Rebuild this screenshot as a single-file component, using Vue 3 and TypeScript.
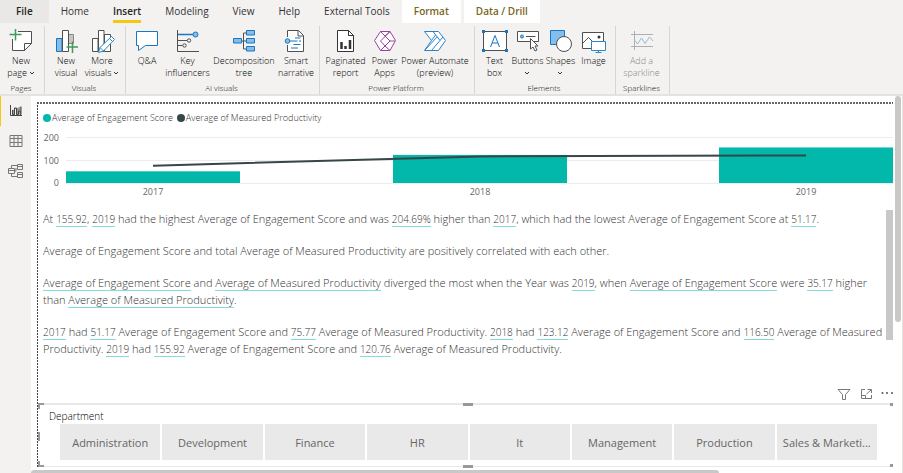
<script setup lang="ts">
import { ref } from 'vue'

interface Tab { name: string; kind?: string }
interface Tool { icon: string; lines: string[]; size: string; menu?: 'inline' | 'below'; disabled?: boolean }
interface Group { name: string; tools: Tool[] }
interface Part { t: string; u?: boolean }

const tabs: Tab[] = [
  { name: 'File', kind: 'file' },
  { name: 'Home' },
  { name: 'Insert' },
  { name: 'Modeling' },
  { name: 'View' },
  { name: 'Help' },
  { name: 'External Tools' },
  { name: 'Format', kind: 'context' },
  { name: 'Data / Drill', kind: 'context' },
]
const activeTab = ref('Insert')

const groups: Group[] = [
  { name: 'Pages', tools: [{ icon: 'page', lines: ['New', 'page'], size: 'm', menu: 'inline' }] },
  {
    name: 'Visuals',
    tools: [
      { icon: 'visual', lines: ['New', 'visual'], size: 'm' },
      { icon: 'more', lines: ['More', 'visuals'], size: 'm', menu: 'inline' },
    ],
  },
  {
    name: 'AI visuals',
    tools: [
      { icon: 'qa', lines: ['Q&A'], size: 'm' },
      { icon: 'key', lines: ['Key', 'influencers'], size: 'l' },
      { icon: 'tree', lines: ['Decomposition', 'tree'], size: 'xl' },
      { icon: 'smart', lines: ['Smart', 'narrative'], size: 'm' },
    ],
  },
  {
    name: 'Power Platform',
    tools: [
      { icon: 'report', lines: ['Paginated', 'report'], size: 'l' },
      { icon: 'apps', lines: ['Power', 'Apps'], size: 's' },
      { icon: 'flow', lines: ['Power Automate', '(preview)'], size: 'xl' },
    ],
  },
  {
    name: 'Elements',
    tools: [
      { icon: 'text', lines: ['Text', 'box'], size: 's' },
      { icon: 'buttons', lines: ['Buttons'], size: 's', menu: 'below' },
      { icon: 'shapes', lines: ['Shapes'], size: 's', menu: 'below' },
      { icon: 'image', lines: ['Image'], size: 's' },
    ],
  },
  { name: 'Sparklines', tools: [{ icon: 'spark', lines: ['Add a', 'sparkline'], size: 'l', disabled: true }] },
]

const eng = 'Average of Engagement Score'
const prod = 'Average of Measured Productivity'
const story: Part[][] = [
  [
    { t: 'At ' }, { t: '155.92', u: true }, { t: ', ' }, { t: '2019', u: true },
    { t: ` had the highest ${eng} and was ` }, { t: '204.69%', u: true }, { t: ' higher than ' },
    { t: '2017', u: true }, { t: `, which had the lowest ${eng} at ` }, { t: '51.17', u: true }, { t: '.' },
  ],
  [{ t: `${eng} and total ${prod} are positively correlated with each other.` }],
  [
    { t: eng, u: true }, { t: ' and ' }, { t: prod, u: true }, { t: ' diverged the most when the Year was ' },
    { t: '2019', u: true }, { t: ', when ' }, { t: eng, u: true }, { t: ' were ' }, { t: '35.17', u: true },
    { t: ' higher than ' }, { t: prod, u: true }, { t: '.' },
  ],
  [
    { t: '2017', u: true }, { t: ' had ' }, { t: '51.17', u: true }, { t: ` ${eng} and ` }, { t: '75.77', u: true },
    { t: ` ${prod}. ` }, { t: '2018', u: true }, { t: ' had ' }, { t: '123.12', u: true }, { t: ` ${eng} and ` },
    { t: '116.50', u: true }, { t: ` ${prod}. ` }, { t: '2019', u: true }, { t: ' had ' },
    { t: '155.92', u: true }, { t: ` ${eng} and ` }, { t: '120.76', u: true }, { t: ` ${prod}.` },
  ],
]
const isNumber = (t: string): boolean => /^\d/.test(t)

const years = [
  { year: '2017', score: 51.17, productivity: 75.77, x: 110 },
  { year: '2018', score: 123.12, productivity: 116.5, x: 437 },
  { year: '2019', score: 155.92, productivity: 120.76, x: 763 },
]
const yOf = (v: number): number => 53 - v * 0.228
const line = years.map((d) => `${d.x},${yOf(d.productivity)}`).join(' ')

const departments = ['Administration', 'Development', 'Finance', 'HR', 'It', 'Management', 'Production', 'Sales & Marketi...']
</script>

<template>
  <div class="app">
    <nav class="tabs" aria-label="Ribbon tabs">
      <button
        v-for="t in tabs" :key="t.name" type="button" class="tab"
        :class="[t.kind, { active: t.name === activeTab }]" @click="activeTab = t.name"
      ><span>{{ t.name }}</span></button>
    </nav>

    <header class="ribbon">
      <section v-for="g in groups" :key="g.name" class="group">
        <div class="tools">
          <button v-for="b in g.tools" :key="b.icon" type="button" class="tool" :class="b.size" :disabled="b.disabled">
            <svg class="icon" viewBox="0 0 26 24" width="26" height="24" fill="none" stroke="#505050" aria-hidden="true">
              <g v-if="b.icon === 'page'">
                <path d="M10 2.500H23.500V14.500L16.500 21.500H4.500V10" fill="#fff" />
                <path d="M23.500 14.500H16.500V21.500" />
                <path d="M7.500 0V11.500M1.500 5.500H13.500" stroke="#3f9b57" stroke-width="1.500" />
              </g>
              <g v-else-if="b.icon === 'visual'">
                <path d="M14.500 5.500h6v9h-6z" fill="#c8c6c4" stroke="#8a8886" />
                <path d="M3.500 9.500h5.500v13h-5.500z" fill="#83beec" stroke="#1976c0" />
                <path d="M9.500 1.500h6v21h-6z" fill="#fff" />
                <path d="M19.500 12.500V24M13.500 18H25" stroke="#3f9b57" stroke-width="1.500" />
              </g>
              <g v-else-if="b.icon === 'more'">
                <path d="M3.500 9.500h5.500v13h-5.500zM9.500 1.500h5.500v21h-5.500zM15.500 5.500h6v17h-6z" fill="#fff" />
                <path d="M9.500 23.500L11 18.500L22.500 7.500L25.500 10.500L14.500 22Z" fill="#fff" stroke="#2b88c8" />
                <path d="M11 18.500L14.500 22M20.500 9.500L23.500 12.500" stroke="#2b88c8" />
              </g>
              <path v-else-if="b.icon === 'qa'" d="M2.500 2.500H23.500V16.500H11.500L4.500 21.500V16.500H2.500Z" fill="#fff" stroke="#1976c0" />
              <g v-else-if="b.icon === 'key'">
                <path d="M2.500 1V22.500H24M3 11.500H12M3 16.500H7.500" />
                <path d="M3 5.500H18" stroke="#1976c0" stroke-width="1.500" />
                <circle cx="20.500" cy="5.500" r="2.500" fill="#83beec" stroke="#1976c0" />
                <circle cx="14" cy="11.500" r="1.700" /><circle cx="9.500" cy="16.500" r="1.700" />
              </g>
              <g v-else-if="b.icon === 'tree'">
                <path d="M10 12H16M12.500 4V20H16M12.500 4H16" />
                <path d="M2.500 9.500h8v4.500h-8zM15.500 1.500h8v4.500h-8zM15.500 9.500h8v4.500h-8zM15.500 17.500h8v4.500h-8z" fill="#83beec" stroke="#1976c0" />
              </g>
              <g v-else-if="b.icon === 'smart'">
                <path d="M4.500 8V1.500H15.500L20.500 6.500V22.500H4.500V16" fill="#fff" /><path d="M15 1.500V7H20.500" />
                <path d="M6 12H14.500M16 12H18M10.500 15.500H17.500M12 9H17.500M8 19H15" stroke="#1976c0" />
                <circle cx="4.500" cy="12" r="2.300" fill="#83beec" stroke="#1976c0" />
              </g>
              <g v-else-if="b.icon === 'report'" stroke="#333">
                <path d="M4.500 1.500H15.500L20.500 6.500V22.500H4.500Z" fill="#fff" /><path d="M15.500 1.500V6.500H20.500" />
                <path d="M8.500 13V20M12.500 17V20M17 11V20" stroke-width="2.500" />
              </g>
              <g v-else-if="b.icon === 'apps'" stroke="#9b3fa5">
                <path d="M8.500 2.500H18L23.500 11.500L18 21.500H8.500L2.500 11.500Z" fill="#fff" />
                <path d="M8.500 2.500L18 12L13 17L18 21.500M18 2.500L13 7L18 12L23 12M8.500 21.500L13 17L8.500 12L18 2.500" />
              </g>
              <g v-else-if="b.icon === 'flow'" stroke="#2b83c9">
                <path d="M2.500 2.500H16.500L23.500 11.500L16.500 21.500H2.500L9.500 11.500Z" fill="#fff" />
                <path d="M11 2.500L18 11.500L9.500 21.500M9.500 11.500L13.500 6M3 21L15 8M18 11.500L21 8" />
              </g>
              <g v-else-if="b.icon === 'text'">
                <path d="M1.500 2.500H24.500V21.500H1.500Z" fill="#fff" />
                <path d="M8.500 18L13 6.500L17.500 18M10 14H16" stroke="#1976c0" />
                <path d="M0 1h3v3H0zM23 1h3v3h-3zM0 20h3v3H0zM23 20h3v3h-3z" fill="#1976c0" stroke="none" />
              </g>
              <g v-else-if="b.icon === 'buttons'">
                <path d="M2.500 2.500H23.500V12.500H2.500Z" fill="#fff" /><path d="M11 7.500H20.500" />
                <circle cx="7" cy="7.500" r="1.500" fill="#83beec" stroke="#1976c0" />
                <path d="M15.500 9.500V20L18 18L20 22L22 21L20 17H23Z" fill="#fff" />
              </g>
              <g v-else-if="b.icon === 'shapes'">
                <path d="M2.500 1.500H16.500V15.500H2.500Z" fill="#83beec" stroke="#1976c0" />
                <circle cx="16" cy="15" r="7.500" fill="#fff" />
              </g>
              <g v-else-if="b.icon === 'image'">
                <path d="M1.500 3.500H22.500V19.500H1.500Z" fill="#fff" />
                <path d="M2 14L7.500 8.500L13 14" /><circle cx="18" cy="8" r="1.500" fill="#333" stroke="none" />
                <path d="M10.500 12.500H24.500V21.500H10.500Z" fill="#fff" stroke="#2b88c8" /><path d="M17.500 21.500V23.500M14.500 23.500H20.500" stroke="#2b88c8" />
              </g>
              <g v-else stroke="#b0aeac">
                <path d="M5.500 2V21M2 5.500H24M2 17.500H24" />
                <path d="M6 11.500L8.500 15L12.500 9L16 14.500L20.500 8L24 12" stroke="#90bddb" />
              </g>
            </svg>
            <span class="caption">
              <span v-for="(l, i) in b.lines" :key="l" class="row">{{ l }}<svg
                v-if="b.menu === 'inline' && i === b.lines.length - 1" class="chev" viewBox="0 0 6 4" width="6" height="4"
              ><path d="M1 1L3 3L5 1" /></svg></span>
              <span v-if="b.menu === 'below'" class="row"><svg class="chev" viewBox="0 0 6 4" width="6" height="4"><path d="M1 1L3 3L5 1" /></svg></span>
            </span>
          </button>
        </div>
        <h2 class="group-name">{{ g.name }}</h2>
      </section>
    </header>

    <div class="workspace">
      <aside class="views">
        <button type="button" class="view on" aria-label="Report view">
          <svg viewBox="0 0 14 12" width="14" height="12" fill="none" stroke="#444">
            <path d="M1.500 0V10.500H13" /><path d="M3.500 5V9.500H5.500V3H7.500V9.500H9.500V6H11V9.500H12V1.500" fill="#999" />
          </svg>
        </button>
        <button type="button" class="view" aria-label="Data view">
          <svg viewBox="0 0 14 12" width="14" height="12" fill="none" stroke="#777">
            <path d="M1 .500H13V11.500H1ZM1 3.500H13M1 7.500H13M5 .500V11.500M9 .500V11.500" />
          </svg>
        </button>
        <button type="button" class="view" aria-label="Model view">
          <svg viewBox="0 0 16 14" width="16" height="14" fill="none" stroke="#777">
            <path d="M.500 4.500H6.500V9.500H.500ZM.500 6.500H6.500M9.500 .500H14.500V5.500H9.500ZM9.500 2.500H14.500M9.500 8.500H14.500V13.500H9.500ZM9.500 10.500H14.500M3.500 4.500V1.500H9M3.500 9.500V12.500H9M6.500 7H8V4" />
          </svg>
        </button>
      </aside>

      <main class="stage">
        <div class="page">
          <section class="chart">
            <ul class="legend">
              <li><i class="dot teal"></i>{{ eng }}</li>
              <li><i class="dot dark"></i>{{ prod }}</li>
            </ul>
            <svg class="plot" viewBox="0 0 850 68" role="img" aria-label="Engagement score and measured productivity by year">
              <path d="M23 7.500H850M23 30.500H850M23 53.500H850" stroke="#ececec" />
              <g class="ticks">
                <text x="16" y="11" text-anchor="end">200</text>
                <text x="16" y="34" text-anchor="end">100</text>
                <text x="16" y="56" text-anchor="end">0</text>
                <text v-for="d in years" :key="d.year" :x="d.x" y="65" text-anchor="middle">{{ d.year }}</text>
              </g>
              <rect v-for="d in years" :key="d.year" :x="d.x - 87" :y="yOf(d.score)" width="174" :height="53 - yOf(d.score)" fill="#01b8aa" />
              <polyline :points="line" fill="none" stroke="#374649" stroke-width="2" />
            </svg>
          </section>

          <section class="story">
            <div class="story-text">
              <p v-for="(p, i) in story" :key="i"><template v-for="(s, j) in p" :key="j"><span v-if="s.u" class="fact" :class="{ num: isNumber(s.t) }">{{ s.t }}</span><template v-else>{{ s.t }}</template></template></p>
            </div>
            <div class="thumb"></div>
          </section>

          <div class="visual-tools">
            <button type="button" aria-label="Filters">
              <svg viewBox="0 0 14 13" width="14" height="13" fill="none" stroke="#777"><path d="M1 1.500H13L8.500 6.500V11.500H5.500V6.500Z" /></svg>
            </button>
            <button type="button" aria-label="Focus mode">
              <svg viewBox="0 0 12 12" width="12" height="12" fill="none" stroke="#777"><path d="M5 1.500H1.500V10.500H11.500V7M7.500 1.500H11.500V5M11 2L6.500 6M1.500 7.500H5.500V10.500" /></svg>
            </button>
            <button type="button" aria-label="More options">
              <svg viewBox="0 0 12 12" width="12" height="12" fill="#555"><circle cx="1.500" cy="5" r="1" /><circle cx="6" cy="5" r="1" /><circle cx="11" cy="5" r="1" /></svg>
            </button>
          </div>

          <section class="slicer">
            <h3>Department</h3>
            <div class="tiles">
              <button v-for="d in departments" :key="d" type="button">{{ d }}</button>
            </div>
            <i class="grip top"></i><i class="grip bottom"></i><i class="grip left"></i>
            <i class="corner tl"></i><i class="corner bl"></i><i class="end tr"></i><i class="end br"></i>
          </section>
        </div>
        <div class="hbar"></div>
        <div class="vbar"></div>
      </main>
    </div>
  </div>
</template>

<style>
body { margin: 0; overflow: hidden; }
</style>

<style scoped>
.app {
  display: flex;
  flex-direction: column;
  height: 100vh;
  background: #f3f2f1;
  color: #333;
  font-family: "Open Sans", "Noto Sans", sans-serif;
  font-size: 9px;
}
button { border: 0; margin: 0; padding: 0; background: none; color: inherit; font: inherit; }
h2, h3, p, ul { margin: 0; padding: 0; font-weight: inherit; }

.tabs { display: flex; height: 23px; flex: none; }
.tab { padding: 0 12px; font-size: 10px; white-space: nowrap; }
.tab span { display: block; height: 20px; line-height: 23px; border-bottom: 3px solid transparent; }
.tab.file { padding: 0 16px; background: #e9e8e7; color: #252423; font-weight: 600; }
.tab.active { color: #252423; font-weight: 600; }
.tab.active span { border-color: #f2c811; }
.tab.context { margin-right: 3px; background: #fff; color: #7a6420; font-weight: 600; }

.ribbon { display: flex; flex: none; height: 73px; border-bottom: 2px solid #e4e3e2; box-sizing: border-box; padding-top: 3px; }
.group { display: flex; flex-direction: column; height: 68px; border-right: 1px solid #d8d6d4; padding: 0 5px 0 3px; }
.tools { display: flex; flex: 1; }
.tool { display: flex; flex-direction: column; align-items: center; padding-top: 3px; color: #000; font-weight: 300; }
.tool.s { width: 33px; }
.tool.m { width: 36px; }
.tool.l { width: 45px; }
.tool.xl { width: 68px; }
.icon { flex: none; }
.caption { display: flex; flex-direction: column; align-items: center; padding-top: 2px; line-height: 12px; white-space: nowrap; }
.row { display: flex; align-items: center; gap: 2px; min-height: 12px; }
.chev { fill: none; stroke: #333; }
.tool:disabled { color: #8a8886; }
.group-name { text-align: center; font-size: 8px; font-weight: 300; line-height: 12px; color: #111; white-space: nowrap; }

.workspace { display: flex; flex: 1; min-height: 0; }
.views { display: flex; flex-direction: column; width: 31px; flex: none; }
.view { display: flex; align-items: center; justify-content: center; height: 30px; border-left: 1px solid transparent; }
.view.on { border-color: #f2c811; }

.stage { position: relative; flex: 1; min-width: 0; background: #fff; border-right: 1px solid #e4e3e2; overflow: hidden; }
.page {
  margin: 6px 9px 0 6px;
  height: 365px;
  display: flex;
  flex-direction: column;
  background:
    repeating-linear-gradient(90deg, #666 0 2px, #fff 2px 3px) top / 100% 2px no-repeat,
    repeating-linear-gradient(180deg, #444 0 2px, #fff 2px 3px) left / 1px 100% no-repeat;
}
.chart { padding: 9px 0 0 6px; }
.legend { display: flex; gap: 4px; list-style: none; line-height: 14px; font-weight: 300; }
.legend li { display: flex; align-items: center; gap: 1px; white-space: nowrap; }
.dot { width: 8px; height: 8px; border-radius: 50%; }
.teal { background: #01b8aa; }
.dark { background: #374649; }
.plot { display: block; width: 100%; margin-top: 5px; }
.ticks { fill: #666; }

.story { display: flex; margin: 12px 0 0 6px; height: 130px; justify-content: space-between; }
.story-text { flex: 1; font-size: 11px; font-weight: 300; line-height: 17px; }
.story-text p { margin-bottom: 15px; }
.fact { padding-bottom: 1px; background: linear-gradient(#7fded5, #7fded5) left bottom / 100% 1px no-repeat; }
.fact.num { font-size: 10px; line-height: 1; }
.thumb { width: 7px; flex: none; background: #c8c8c8; }

.visual-tools { display: flex; align-items: center; justify-content: flex-end; gap: 9px; height: 18px; margin-top: auto; }
.visual-tools button { display: flex; }

.slicer { position: relative; margin-left: 1px; border: solid #e8e8e8; border-width: 2px 0 1px; padding: 3px 16px 6px 22px; }
.slicer h3 { margin-left: -11px; font-size: 10px; font-weight: 300; line-height: 16px; color: #000; }
.tiles { display: grid; grid-template-columns: repeat(8, 1fr); gap: 2px; }
.tiles button { height: 36px; background: #e9e9e9; color: #666; font-size: 11px; white-space: nowrap; }
.grip, .corner, .end { position: absolute; box-sizing: border-box; }
.grip { background: #999; }
.grip.top, .grip.bottom { left: calc(50% - 3px); width: 10px; height: 3px; }
.grip.top { top: -2px; }
.grip.bottom { bottom: -2px; }
.grip.left { left: 0; top: 27px; width: 2px; height: 9px; }
.corner { left: 0; width: 6px; height: 6px; border: solid #999; }
.corner.tl { top: -2px; border-width: 2px 0 0 2px; }
.corner.bl { bottom: -1px; border-width: 0 0 2px 2px; }
.end { right: 0; width: 3px; height: 3px; background: #999; }
.end.tr { top: -2px; }
.end.br { bottom: -1px; }

.hbar { position: absolute; left: 0; bottom: 0; width: 79%; height: 3px; border-radius: 3px 3px 0 0; background: #c8c8c8; }
.vbar { position: absolute; right: 1px; top: 0; width: 6px; height: 60%; border-radius: 3px; background: #c8c8c8; }
</style>
